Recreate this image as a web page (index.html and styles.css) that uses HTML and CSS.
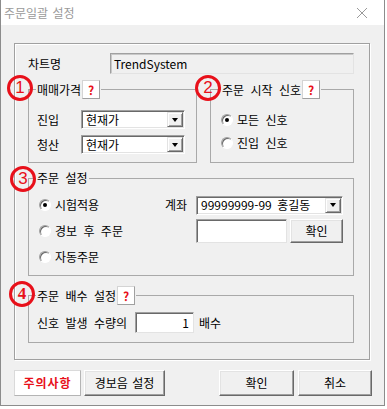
FILE: index.html
```html
<!DOCTYPE html>
<html lang="ko">
<head>
  <meta charset="UTF-8">
  <title>주문일괄 설정</title>
  <link rel="stylesheet" href="styles.css">
</head>
<body>
  <div class="window">
    <div class="titlebar">
      <span class="title">주문일괄 설정</span>
      <svg class="close" viewBox="0 0 10 10"><path d="M0 0L10 10M10 0L0 10" stroke="#9a9a9a" stroke-width="1"/></svg>
    </div>

    <div class="client">
      <div class="outer">
        <div class="chart-row">
          <span class="chart-label">차트명</span>
          <div class="field readonly">TrendSystem</div>
        </div>

        <div class="pair">
          <fieldset class="group g-price">
            <legend>
              <span class="mark m1">1</span>
              <span>매매가격</span><span class="help">?</span>
            </legend>
            <div class="row">
              <span class="lbl">진입</span>
              <div class="combo"><span class="txt">현재가</span><span class="drop"></span></div>
            </div>
            <div class="row">
              <span class="lbl">청산</span>
              <div class="combo"><span class="txt">현재가</span><span class="drop"></span></div>
            </div>
          </fieldset>

          <fieldset class="group g-signal">
            <legend>
              <span class="mark m2">2</span>
              <span>주문 시작 신호</span><span class="help">?</span>
            </legend>
            <div class="radio"><span class="dot on"></span>모든 신호</div>
            <div class="radio"><span class="dot"></span>진입 신호</div>
          </fieldset>
        </div>

        <fieldset class="group g-order">
          <legend>
            <span class="mark m3">3</span>
            <span>주문 설정</span>
          </legend>
          <div class="order-grid">
            <div class="radio"><span class="dot on"></span>시험적용</div>
            <span class="acct-label">계좌</span>
            <div class="combo acct"><span class="txt">99999999-99 홍길동</span><span class="drop"></span></div>

            <div class="radio"><span class="dot"></span>경보 후 주문</div>
            <span></span>
            <div class="confirm-row">
              <div class="field blank"></div>
              <div class="btn small">확인</div>
            </div>

            <div class="radio"><span class="dot"></span>자동주문</div>
          </div>
        </fieldset>

        <fieldset class="group g-mult">
          <legend>
            <span class="mark m4">4</span>
            <span>주문 배수 설정</span><span class="help">?</span>
          </legend>
          <div class="mult-row">
            <span>신호 발생 수량의</span>
            <div class="field qty">1</div>
            <span>배수</span>
          </div>
        </fieldset>
      </div>

      <div class="buttons">
        <div class="btn warn">주의사항</div>
        <div class="btn sound">경보음 설정</div>
        <div class="btn ok">확인</div>
        <div class="btn cancel">취소</div>
      </div>
    </div>
  </div>
</body>
</html>
```

FILE: styles.css
```css
* {
  box-sizing: border-box;
}
body {
  margin: 0;
  background: #fff;
  font-family: "Noto Sans CJK KR", sans-serif;
  font-size: 12px;
  line-height: 14px;
  word-spacing: 3px;
  color: #000;
}
.window {
  width: 385px;
  height: 406px;
  background: #f0f0f0;
  border: 1px solid #8c8c8c;
  border-top: none;
}
.titlebar {
  height: 25px;
  background: #fff;
  display: flex;
  align-items: center;
  padding-left: 3px;
  word-spacing: 1px;
}
.title {
  color: #9a9a9a;
}
.close {
  width: 10px;
  height: 10px;
  margin-left: auto;
  margin-right: 17px;
}
.client {
  padding: 18px 0 0 13px;
}
.outer {
  width: 356px;
  height: 317px;
  border: 1px solid #a0a0a0;
  box-shadow: 1px 1px 0 #fff, inset 1px 1px 0 #fff;
  padding: 9px 0 0 13px;
}
.chart-row {
  display: flex;
  height: 21px;
  align-items: center;
}
.chart-label {
  width: 82px;
}
.field {
  height: 21px;
  background: #fff;
  border: 1px solid;
  border-color: #a0a0a0 #e3e3e3 #e3e3e3 #a0a0a0;
  box-shadow: inset 1px 1px 0 #696969;
  padding: 3px 0 0 3px;
}
.field.readonly {
  width: 244px;
  background: #f0f0f0;
  box-shadow: inset 1px 1px 0 #c8c8c8;
}
.pair {
  display: flex;
  gap: 13px;
  margin-top: 6px;
}
.group {
  margin: 0;
  min-width: 0;
  border: 1px solid #a9a9a9;
  padding: 11px 0 8px 7px;
}
.group legend {
  position: relative;
  display: flex;
  align-items: center;
  gap: 1px;
  padding: 0 1px;
}
.help {
  width: 18px;
  height: 19px;
  background: #fff;
  border: 1px solid;
  border-color: #d4d4d4 #a0a0a0 #a0a0a0 #d4d4d4;
  color: #e8101a;
  font-weight: bold;
  display: flex;
  align-items: center;
  justify-content: center;
}
.mark {
  position: absolute;
  top: -5px;
  width: 26px;
  height: 26px;
  border: 3px solid #e8101a;
  border-radius: 50%;
  color: #e8101a;
  font-family: "Liberation Sans", sans-serif;
  font-size: 17px;
  display: flex;
  align-items: center;
  justify-content: center;
}
.m1 { left: -29px; }
.m2 { left: -26px; }
.m3 { left: -26px; }
.m4 {
  left: -27px;
  font-family: "Liberation Serif", serif;
  font-weight: bold;
}
.g-price {
  width: 169px;
}
.g-signal {
  width: 144px;
  padding-left: 10px;
}
.row {
  display: flex;
  align-items: center;
  margin-left: 1px;
}
.row + .row {
  margin-top: 6px;
}
.lbl {
  width: 44px;
}
.combo {
  width: 104px;
  height: 19px;
  display: flex;
  align-items: center;
  background: #fff;
  border: 1px solid;
  border-color: #a0a0a0 #fff #fff #a0a0a0;
  box-shadow: inset 1px 1px 0 #696969, inset -1px -1px 0 #e3e3e3;
  padding: 1px 1px 1px 4px;
  word-spacing: 2px;
}
.combo .txt {
  flex: 1;
}
.drop {
  width: 16px;
  height: 15px;
  background: #f0f0f0;
  border: 1px solid;
  border-color: #e3e3e3 #696969 #696969 #e3e3e3;
  box-shadow: inset 1px 1px 0 #fff, inset -1px -1px 0 #a0a0a0;
  display: flex;
  align-items: center;
  justify-content: center;
}
.drop::after {
  content: "";
  border-left: 3.5px solid transparent;
  border-right: 3.5px solid transparent;
  border-top: 4px solid #000;
}
.radio {
  display: flex;
  align-items: center;
  gap: 4px;
  height: 19px;
}
.g-signal .radio + .radio {
  margin-top: 4px;
}
.dot {
  position: relative;
  width: 12px;
  height: 12px;
  border-radius: 50%;
  background: #fff;
  border: 1px solid;
  border-color: #a0a0a0 #fff #fff #a0a0a0;
  box-shadow: inset 1px 1px 0 #696969;
}
.dot.on::after {
  content: "";
  position: absolute;
  left: 3px;
  top: 3px;
  width: 4px;
  height: 4px;
  border-radius: 50%;
  background: #000;
}
.g-order {
  width: 326px;
  margin-top: 8px;
  padding: 7px 0 5px 7px;
}
.order-grid {
  display: grid;
  grid-template-columns: 129px 31px 147px;
  grid-auto-rows: 26px;
  align-items: center;
}
.order-grid .radio {
  margin-left: 3px;
}
.acct {
  width: 147px;
}
.confirm-row {
  display: flex;
  gap: 3px;
}
.field.blank {
  width: 91px;
  height: 24px;
}
.btn {
  height: 26px;
  background: #f0f0f0;
  border: 1px solid;
  border-color: #fff #696969 #696969 #fff;
  box-shadow: inset -1px -1px 0 #a0a0a0, inset 1px 1px 0 #e3e3e3;
  display: flex;
  align-items: center;
  justify-content: center;
  word-spacing: 1px;
}
.btn.small {
  width: 53px;
  height: 24px;
}
.g-mult {
  width: 326px;
  margin-top: 10px;
  padding: 7px 0 9px 7px;
}
.mult-row {
  display: flex;
  align-items: center;
  margin-left: 1px;
}
.field.qty {
  width: 59px;
  margin: 0 5px 0 8px;
  text-align: right;
  padding-right: 4px;
}
.buttons {
  display: flex;
  margin-top: 10px;
}
.btn.warn {
  width: 67px;
  background: #fff;
  border-color: #dadada #b4b4b4 #b4b4b4 #dadada;
  box-shadow: none;
  color: #e8101a;
  font-weight: bold;
  letter-spacing: 1px;
}
.btn.sound {
  width: 81px;
  margin-left: 3px;
}
.btn.ok {
  width: 75px;
  margin-left: 54px;
}
.btn.cancel {
  width: 74px;
  margin-left: 4px;
}
```
